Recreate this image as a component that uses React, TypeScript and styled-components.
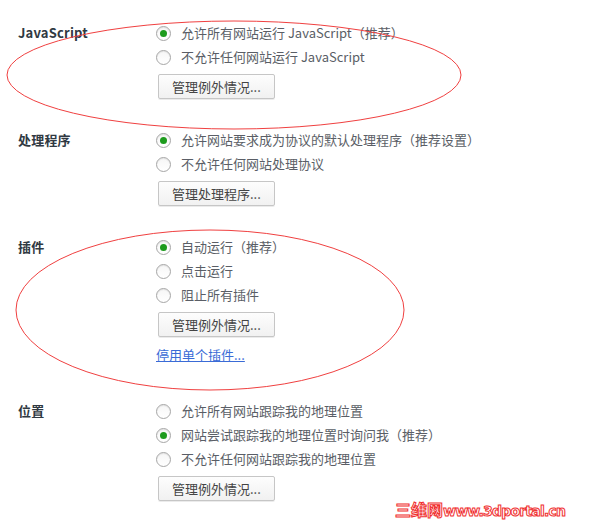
import React from "react";
import styled, { createGlobalStyle } from "styled-components";

const GlobalStyle = createGlobalStyle`
  html, body {
    margin: 0;
    padding: 0;
    background: #fff;
  }
  body {
    font-family: "Noto Sans CJK SC", "Liberation Sans", sans-serif;
    font-size: 13px;
    color: #5a5a5a;
  }
`;

interface IOption {
  text: string;
  checked?: boolean;
}

interface ISection {
  title: string;
  options: IOption[];
  button: string;
  link?: string;
}

const sections: ISection[] = [
  {
    title: "JavaScript",
    options: [
      { text: "允许所有网站运行 JavaScript（推荐）", checked: true },
      { text: "不允许任何网站运行 JavaScript" },
    ],
    button: "管理例外情况...",
  },
  {
    title: "处理程序",
    options: [
      { text: "允许网站要求成为协议的默认处理程序（推荐设置）", checked: true },
      { text: "不允许任何网站处理协议" },
    ],
    button: "管理处理程序...",
  },
  {
    title: "插件",
    options: [
      { text: "自动运行（推荐）", checked: true },
      { text: "点击运行" },
      { text: "阻止所有插件" },
    ],
    button: "管理例外情况...",
    link: "停用单个插件...",
  },
  {
    title: "位置",
    options: [
      { text: "允许所有网站跟踪我的地理位置" },
      { text: "网站尝试跟踪我的地理位置时询问我（推荐）", checked: true },
      { text: "不允许任何网站跟踪我的地理位置" },
    ],
    button: "管理例外情况...",
  },
];

const App = () => {
  return (
    <Page>
      <GlobalStyle />
      {sections.map((s) => (
        <Section key={s.title}>
          <Title>{s.title}</Title>
          <Options>
            {s.options.map((o) => (
              <RadioRow key={o.text}>
                <Radio checked={!!o.checked} />
                <RadioText>{o.text}</RadioText>
              </RadioRow>
            ))}
            <Button>{s.button}</Button>
            {s.link && <Link>{s.link}</Link>}
          </Options>
        </Section>
      ))}
      <Marks width="613" height="522" viewBox="0 0 613 522">
        <ellipse cx="234" cy="75" rx="227" ry="54" fill="none" stroke="#f04040" strokeWidth="1" />
        <ellipse cx="210" cy="310" rx="194" ry="80" fill="none" stroke="#f04040" strokeWidth="1" />
      </Marks>
      <Watermark>
        <span>三维网</span>
        <Latin>www.3dportal.cn</Latin>
      </Watermark>
    </Page>
  );
};

const Page = styled.div`
  position: relative;
  width: 613px;
  height: 522px;
  overflow: hidden;
  padding-top: 21px;
  box-sizing: border-box;
`;
const Section = styled.div`
  display: flex;
  padding-left: 18px;
  margin-bottom: 29px;
`;
const Title = styled.div`
  width: 138px;
  flex-shrink: 0;
  height: 24px;
  line-height: 24px;
  font-weight: bold;
  font-size: 13px;
  letter-spacing: 0.2px;
  color: #303942;
`;
const Options = styled.div`
  display: flex;
  flex-direction: column;
  align-items: flex-start;
`;
const RadioRow = styled.div`
  display: flex;
  align-items: center;
  height: 24px;
`;
const Radio = styled.span<{ checked: boolean }>`
  position: relative;
  width: 13px;
  height: 13px;
  border-radius: 50%;
  border: 1px solid #a6a6a6;
  background: linear-gradient(#f6f6f6, #ffffff);
  box-shadow: inset 0 1px 1px rgba(0, 0, 0, 0.08);
  margin-right: 10px;

  &::after {
    content: "";
    display: ${(p) => (p.checked ? "block" : "none")};
    position: absolute;
    left: 3px;
    top: 3px;
    width: 7px;
    height: 7px;
    border-radius: 50%;
    background: #1d9b1d;
  }
`;
const RadioText = styled.span`
  line-height: 24px;
  color: #5a5e66;
  white-space: nowrap;
`;
const Button = styled.div`
  margin-top: 5px;
  margin-left: 2px;
  height: 23px;
  line-height: 23px;
  padding: 0 13px;
  border: 1px solid #c6c6c6;
  border-radius: 2px;
  background: linear-gradient(#fdfdfd, #f1f1f1);
  box-shadow: 0 1px 0 rgba(0, 0, 0, 0.08);
  color: #444;
`;
const Link = styled.a`
  margin-top: 9px;
  margin-bottom: 6px;
  line-height: 18px;
  color: #3a6bd6;
  text-decoration: underline;
  cursor: pointer;
`;
const Marks = styled.svg`
  position: absolute;
  left: 0;
  top: 0;
  pointer-events: none;
`;
const Watermark = styled.div`
  position: absolute;
  left: 395px;
  top: 497px;
  display: flex;
  align-items: baseline;
  font-weight: bold;
  font-size: 16px;
  color: #fff;
  -webkit-text-stroke: 1px #f03030;
  white-space: nowrap;
`;
const Latin = styled.span`
  font-family: "DejaVu Sans", sans-serif;
  font-size: 14px;
  letter-spacing: -0.8px;
`;

export default App;
